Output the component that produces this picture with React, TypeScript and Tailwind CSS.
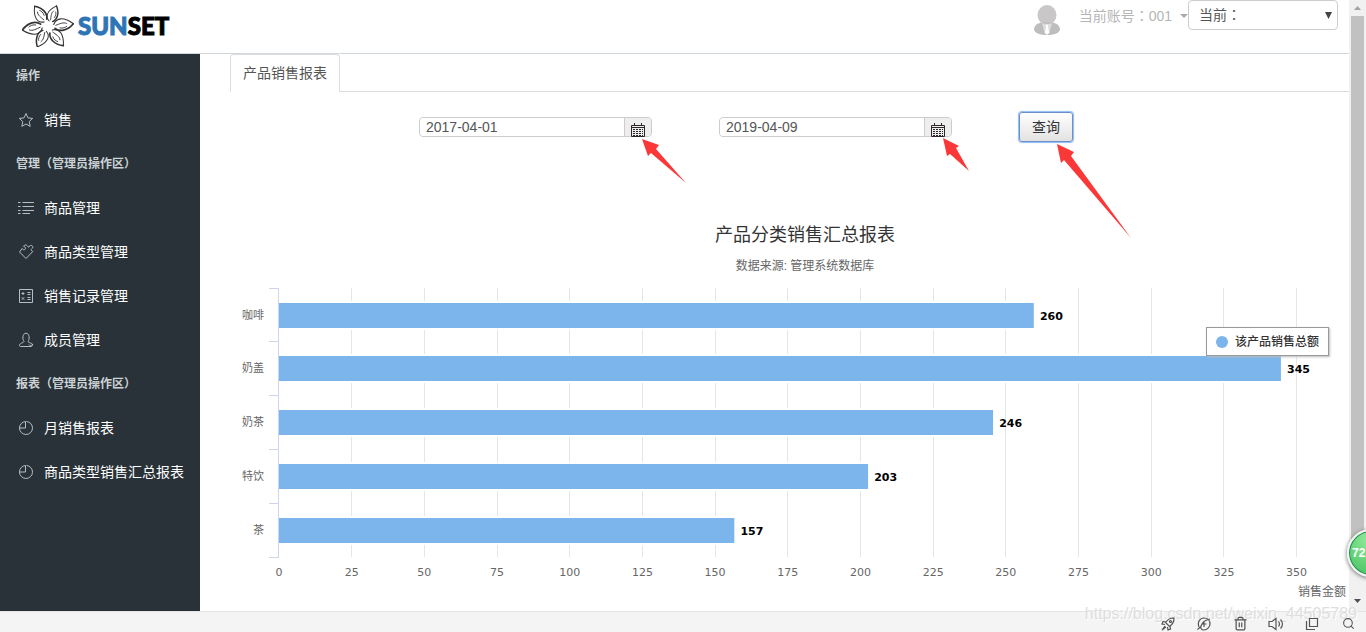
import type { ReactNode } from 'react';
import { Search, Trash2 } from 'lucide-react';

const StarIcon = () => (
  <path d="M8 1.5l2 4.4 4.7.5-3.5 3.2 1 4.8L8 12l-4.2 2.4 1-4.8L1.3 6.4 6 5.9z" />
);

const ListIcon = () => (
  <path d="M4.5 2.5H16M4.5 6.5H16M4.5 10.5H16M4.5 13.5H12M0 2.5h2.5M0 6.5h2.5M0 10.5h2.5M0 13.5h2.5" />
);

const PuzzleIcon = () => (
  <path d="M8 14.5L1.5 8l2.7-3.5C5 6.500 8 6 7.500 3.800 7.300 2.800 6 3 5.500 2.300 6.500.6 8.500.6 9.500 2c.6 1.400 1.800 1.200 2 0 1.500-1.200 3.500-.4 3.300 1.400-.1 1.200-1.600 1.200-1.600 2.300 0 .9.700 1.300 1.600 1.800z" />
);

const CalcIcon = () => (
  <>
    <path d="M1.5 1.5h13v13h-13z" />
    <path d="M3.5 5.5h3M5 4v3M9.5 4.5h3M9.5 6.5h3M3.8 9.3l2.4 2.4M6.2 9.3l-2.4 2.4M9.5 9.5h3M9.5 11.5h3" />
  </>
);

const UserIcon = () => (
  <path d="M6 9.2C4.300 7.800 4.200 1.200 8 1.200s3.700 6.600 2 8c-.5 1.500 4.200 1.600 4.700 3.500 0 .8-.8 1.800-1.700 1.800H2.500c-.6 0-1-.5-1-1.200C1.800 10.800 6.500 10.700 6 9.200zM11 12.500l1.500 1.500 2.500-2" />
);

const PieIcon = () => (
  <path d="M8.500 1.500a6.500 6.500 0 1 1-7 6.500H7.500V1.500A6.500 6.500 0 0 0 1.500 8" />
);

const menu = [
  { title: '操作', items: [{ name: '销售', icon: StarIcon }] },
  {
    title: '管理（管理员操作区）',
    items: [
      { name: '商品管理', icon: ListIcon },
      { name: '商品类型管理', icon: PuzzleIcon },
      { name: '销售记录管理', icon: CalcIcon },
      { name: '成员管理', icon: UserIcon },
    ],
  },
  {
    title: '报表（管理员操作区）',
    items: [
      { name: '月销售报表', icon: PieIcon },
      { name: '商品类型销售汇总报表', icon: PieIcon },
    ],
  },
];

const sales = [
  { name: '咖啡', value: 260 },
  { name: '奶盖', value: 345 },
  { name: '奶茶', value: 246 },
  { name: '特饮', value: 203 },
  { name: '茶', value: 157 },
];

const AXIS_MAX = 367;
const PLOT = 269;
const ticks = Array.from({ length: 15 }, (_, i) => i * 25);
const pct = (v: number) => `${(v / AXIS_MAX) * 100}%`;
const rowTop = (i: number) => Math.floor((PLOT / sales.length) * i);

const petals = [
  { angle: 171, scale: 1 },
  { angle: -124, scale: 0.92 },
  { angle: -67, scale: 0.84 },
  { angle: -5, scale: 0.98 },
  { angle: 52, scale: 0.96 },
  { angle: 117, scale: 0.9 },
];

function Logo() {
  return (
    <a href="#" className="flex items-center gap-1">
      <svg width="52" height="42" viewBox="0 0 52 42" fill="none" stroke="#333" strokeLinecap="round">
        {petals.map((p) => (
          <g key={p.angle} transform={`translate(26 21) rotate(${p.angle}) scale(${p.scale})`}>
            <path d="M6 -1C9-8 17-8 26 0" strokeWidth="1.100" />
            <path d="M26 0C19 7 11 7 7 3" strokeWidth="1.700" />
            <path d="M8 0c4-1 8-3 11-1M12 3c3 1 6 0 7-1" strokeWidth="0.900" />
          </g>
        ))}
      </svg>
      <span className="font-[Lato,sans-serif] text-2xl leading-8 font-black text-black [-webkit-text-stroke:1px]">
        <span className="text-[#2e75b6]">SUN</span>SET
      </span>
    </a>
  );
}

function Header() {
  return (
    <header className="flex h-[54px] shrink-0 items-start justify-between border-b border-[#cfd8dc] pr-[11px] pl-[22px] font-['Liberation_Sans','Noto_Sans_CJK_TC',sans-serif]">
      <div className="pt-[5px]">
        <Logo />
      </div>
      <div className="flex items-start">
        <svg width="28" height="32" viewBox="0 0 28 32" className="mt-1 mr-[18px]">
          <ellipse cx="14" cy="11" rx="9.500" ry="10" fill="#c9c7c7" />
          <path d="M1 26c0-5 4-7 8-7.500h10c4 .5 8 2.500 8 7.500-1 3-6 5-13 5S2 29 1 26z" fill="#bdbdbd" />
          <path d="M9 19l5 2 5-2-3 11h-4z" fill="#dedede" />
          <path d="M12.500 20.500h3l-.7 2 1.400 6L14 31l-2.200-2.500 1.400-6z" fill="#fff" />
        </svg>
        <button type="button" className="flex h-8 items-center gap-2 text-sm whitespace-nowrap text-[#b5b5b5]">
          当前账号：001
          <svg width="8" height="4" viewBox="0 0 8 4" fill="#aaa">
            <path d="M0 0h8L4 4z" />
          </svg>
        </button>
        <div className="relative">
          <select
            aria-label="当前"
            className="h-[30px] w-[150px] appearance-none rounded border border-[#ccc] bg-white pl-[10px] text-sm text-[#555]"
          >
            <option>当前：</option>
          </select>
          <svg width="7" height="7" viewBox="0 0 7 7" fill="#444" className="pointer-events-none absolute top-3 right-[6px]">
            <path d="M0 0h7L3.500 7z" />
          </svg>
        </div>
      </div>
    </header>
  );
}

function Sidebar() {
  return (
    <nav className="w-[200px] shrink-0 bg-[#283238]">
      {menu.map((group) => (
        <div key={group.title}>
          <h2 className="flex h-11 items-center pl-4 font-['Liberation_Sans','Noto_Sans_CJK_TC',sans-serif] text-xs font-bold text-[#ccd2d5]">
            {group.title}
          </h2>
          {group.items.map((item) => (
            <a key={item.name} href="#" className="flex h-11 items-center gap-[10px] pl-[18px] text-sm whitespace-nowrap text-white">
              <svg width="16" height="16" viewBox="0 0 16 16" fill="none" stroke="#b4bfc5">
                <item.icon />
              </svg>
              {item.name}
            </a>
          ))}
        </div>
      ))}
    </nav>
  );
}

function DateField({ label, value, children }: { label: string; value: string; children: ReactNode }) {
  return (
    <div className="relative mt-[5px] flex h-5 w-[233px] rounded border border-[#ccc]">
      <input
        type="text"
        aria-label={label}
        defaultValue={value}
        className="min-w-0 flex-1 rounded-l bg-white pl-[6px] text-sm text-[#555] outline-none"
      />
      <button type="button" aria-label={`选择${label}`} className="flex w-[27px] justify-center rounded-r border-l border-[#ccc] bg-[#eee] pt-[5px]">
        <svg width="14" height="14" viewBox="0 0 14 14" fill="none" stroke="#2d272c">
          <path d="M.5 2.500h13v11H.5zM3.500 0v3M10.500 0v3M1 4.500h12" />
          <path d="M2 6.500h10M2 8.500h10M2 10.500h10M2 12.500h10" strokeDasharray="2 1" />
        </svg>
      </button>
      {children}
    </div>
  );
}

function QueryForm() {
  return (
    <form className="flex items-start gap-[67px] pt-5 pl-[189px]">
      <DateField label="开始日期" value="2017-04-01">
        <svg width="46" height="46" viewBox="0 0 46 46" fill="#fb3838" className="pointer-events-none absolute top-[21px] left-[222px]">
          <path d="M0 0l17 6-3 4 30 34L9 14l-3 3z" />
        </svg>
      </DateField>
      <DateField label="结束日期" value="2019-04-09">
        <svg width="28" height="36" viewBox="0 0 28 36" fill="#fb3838" className="pointer-events-none absolute top-5 left-[222px]">
          <path d="M1 0l16 8-3 2 13 23L8 16l-3 2z" />
        </svg>
      </DateField>
      <div className="relative">
        <button
          type="button"
          className="h-[30px] w-[54px] rounded-[3px] border border-[#6c8fc7] bg-linear-to-b from-white to-[#e2e2e2] text-sm text-[#333] shadow-[0_0_1px_1px_#8ebcf5]"
        >
          查询
        </button>
        <svg width="76" height="96" viewBox="0 0 76 96" fill="#fb3838" className="pointer-events-none absolute top-8 left-[38px]">
          <path d="M0 0l17 8-3 4 60 82L7 16l-3 3z" />
        </svg>
      </div>
    </form>
  );
}

function Chart() {
  return (
    <section className="pt-[80px]">
      <div className="pl-[31px] text-center">
        <h1 className="text-lg leading-[26px] text-[#333]">产品分类销售汇总报表</h1>
        <p className="mt-2 text-xs leading-5 text-[#666]">数据来源: 管理系统数据库</p>
      </div>
      <div className="relative mt-[12px] pr-[3px] pl-[49px]">
        <svg width="100%" height={PLOT + 25} className="block overflow-visible font-['DejaVu_Sans','Noto_Sans_CJK_SC',sans-serif]">
          {ticks.map((t) => (
            <g key={t}>
              {t > 0 && <line x1={pct(t)} x2={pct(t)} y1="0" y2={PLOT} stroke="#e6e6e6" shapeRendering="crispEdges" />}
              <text x={pct(t)} y={PLOT + 19} textAnchor="middle" className="fill-[#666] text-[11px]">
                {t}
              </text>
            </g>
          ))}
          {sales.map((s, i) => (
            <g key={s.name}>
              <rect x="-1" y={rowTop(i) + 14} width={pct(s.value + 0.3)} height="27" fill="#7cb5ec" stroke="#fff" strokeWidth="2" />
              <text x="-15" y={rowTop(i) + 31} textAnchor="end" className="fill-[#666] text-[11px]">
                {s.name}
              </text>
              <text x={pct(s.value)} dx="5" y={rowTop(i) + 32} className="fill-black text-[11px] font-bold">
                {s.value}
              </text>
            </g>
          ))}
          <g stroke="#ccd6eb" shapeRendering="crispEdges">
            {[...sales, null].map((_, i) => (
              <line key={i} x1="-10" x2="0" y1={rowTop(i)} y2={rowTop(i)} />
            ))}
            <line x1="-1" x2="-1" y1="0" y2={PLOT} />
          </g>
        </svg>
        <div className="text-right text-xs leading-5 text-[#666]">销售金额</div>
        <div className="absolute top-[39px] right-5 flex h-[29px] items-center gap-[7px] border border-[#999] bg-white px-[9px] text-xs font-medium text-[#333] shadow-[1px_1px_2px_#bbb]">
          <span className="size-3 rounded-full bg-[#7cb5ec]" />
          该产品销售总额
        </div>
      </div>
    </section>
  );
}

function ScrollBar() {
  return (
    <div className="flex w-[17px] shrink-0 flex-col items-center bg-[#f1f1f1]">
      <svg width="7" height="4" viewBox="0 0 7 4" fill="#a3a3a3" className="my-[6px] shrink-0">
        <path d="M0 4h7L3.500 0z" />
      </svg>
      <div className="w-[13px] flex-1 bg-[#c1c1c1]" />
      <svg width="7" height="4" viewBox="0 0 7 4" fill="#505050" className="mt-12 mb-2 shrink-0">
        <path d="M0 0h7L3.500 4z" />
      </svg>
    </div>
  );
}

const toolButton = 'relative flex size-[14px] items-center justify-center';

function StatusBar() {
  return (
    <footer className="relative flex h-[21px] shrink-0 items-center justify-end gap-[22px] border-t border-[#e5e5e5] bg-[#f4f4f4] pt-[3px] pr-[11px] text-[#555]">
      <span className="pointer-events-none absolute -top-2 right-[9px] text-base leading-5 text-[#dedede] [text-shadow:1px_1px_0_#fff]">
        https://blog.csdn.net/weixin_44505789
      </span>
      <button type="button" aria-label="加速" className={toolButton}>
        <svg width="14" height="14" viewBox="0 0 14 14" fill="none" stroke="currentColor" strokeWidth="1.200">
          <path d="M13 1C9 .8 6.500 2.500 4.500 5.500L8.500 9.500C11.500 7.500 13.200 5 13 1zM5 5L2 4.500 1 7l3 .5M9 9l.5 3L7 13l-.5-3M4 9l-3 4 4-3" />
          <circle cx="9.500" cy="4.500" r="1" />
        </svg>
      </button>
      <button type="button" aria-label="下载" className={toolButton}>
        <svg width="14" height="14" viewBox="0 0 14 14" fill="none" stroke="currentColor" strokeWidth="1.200">
          <path d="M2 10C0 5 3 1 7 1s6 3 6 6-3 6-6 6c-3 0-3.500-2-3-4C5 6 8 3 13 2M7 4v6M4.500 7h5M.5 12.500l3-2.500" />
        </svg>
      </button>
      <button type="button" aria-label="清理" className={toolButton}>
        <Trash2 size={15} strokeWidth={2} className="shrink-0" />
      </button>
      <button type="button" aria-label="声音" className={toolButton}>
        <svg width="16" height="14" viewBox="0 0 16 14" fill="none" stroke="currentColor" strokeWidth="1.200" className="shrink-0">
          <path d="M1 4.500h3L8 1.500v11L4 9.500H1zM10.500 4.500c1.200 1.500 1.200 3.500 0 5M12.500 2.500c2.600 2.500 2.600 6.500 0 9" />
        </svg>
      </button>
      <button type="button" aria-label="窗口" className={toolButton}>
        <svg width="14" height="14" viewBox="0 0 14 14" fill="none" stroke="currentColor" strokeWidth="1.200">
          <path d="M4.500 1.500h8v8h-8zM1.500 4v8.500H10" />
        </svg>
      </button>
      <button type="button" aria-label="搜索" className={toolButton}>
        <Search size={13} strokeWidth={2} className="shrink-0" />
      </button>
    </footer>
  );
}

export default function App() {
  return (
    <div className="relative flex h-screen flex-col overflow-hidden bg-white font-['Liberation_Sans','Noto_Sans_CJK_SC',sans-serif]">
      <div className="flex min-h-0 flex-1">
        <div className="flex min-w-0 flex-1 flex-col">
          <Header />
          <div className="flex min-h-0 flex-1">
            <Sidebar />
            <main className="min-w-0 flex-1 pl-[30px]">
              <div role="tablist" className="flex border-b border-[#ddd]">
                <button
                  type="button"
                  role="tab"
                  aria-selected="true"
                  className="-mb-px h-[38px] rounded-t border border-b-0 border-[#ddd] bg-white px-3 pb-[2px] text-sm text-[#555]"
                >
                  产品销售报表
                </button>
              </div>
              <QueryForm />
              <Chart />
            </main>
          </div>
        </div>
        <ScrollBar />
      </div>
      <StatusBar />
      <div className="absolute -right-[29px] bottom-[55px] flex size-12 items-center rounded-full border-2 border-[#f4f4f4] bg-radial-[at_40%_20%] from-[#8fe89a] to-[#35b850] pl-[3px] text-xs font-bold text-white shadow-[0_1px_4px_#666] inset-ring inset-ring-[#1d8a50]">
        72
      </div>
    </div>
  );
}
